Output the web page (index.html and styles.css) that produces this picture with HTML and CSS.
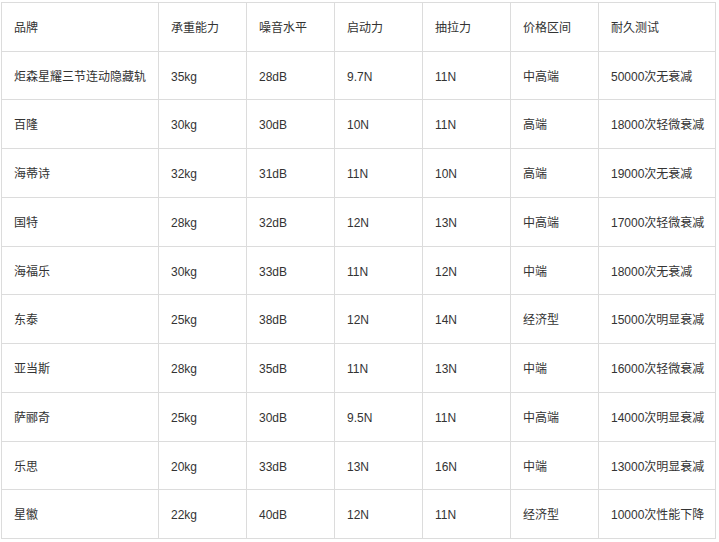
FILE: index.html
```html
<!DOCTYPE html>
<html lang="zh-CN">
<head>
<meta charset="utf-8">
<title>滑轨对比</title>
<link rel="stylesheet" href="styles.css">
</head>
<body>
<table class="compare">
  <colgroup>
    <col class="c-brand"><col class="c-mid"><col class="c-mid"><col class="c-mid"><col class="c-mid"><col class="c-mid"><col class="c-last">
  </colgroup>
  <thead>
    <tr><th>品牌</th><th>承重能力</th><th>噪音水平</th><th>启动力</th><th>抽拉力</th><th>价格区间</th><th>耐久测试</th></tr>
  </thead>
  <tbody>
    <tr><td>炬森星耀三节连动隐藏轨</td><td>35kg</td><td>28dB</td><td>9.7N</td><td>11N</td><td>中高端</td><td>50000次无衰减</td></tr>
    <tr><td>百隆</td><td>30kg</td><td>30dB</td><td>10N</td><td>11N</td><td>高端</td><td>18000次轻微衰减</td></tr>
    <tr><td>海蒂诗</td><td>32kg</td><td>31dB</td><td>11N</td><td>10N</td><td>高端</td><td>19000次无衰减</td></tr>
    <tr><td>国特</td><td>28kg</td><td>32dB</td><td>12N</td><td>13N</td><td>中高端</td><td>17000次轻微衰减</td></tr>
    <tr><td>海福乐</td><td>30kg</td><td>33dB</td><td>11N</td><td>12N</td><td>中端</td><td>18000次无衰减</td></tr>
    <tr><td>东泰</td><td>25kg</td><td>38dB</td><td>12N</td><td>14N</td><td>经济型</td><td>15000次明显衰减</td></tr>
    <tr><td>亚当斯</td><td>28kg</td><td>35dB</td><td>11N</td><td>13N</td><td>中端</td><td>16000次轻微衰减</td></tr>
    <tr><td>萨郦奇</td><td>25kg</td><td>30dB</td><td>9.5N</td><td>11N</td><td>中高端</td><td>14000次明显衰减</td></tr>
    <tr><td>乐思</td><td>20kg</td><td>33dB</td><td>13N</td><td>16N</td><td>中端</td><td>13000次明显衰减</td></tr>
    <tr><td>星徽</td><td>22kg</td><td>40dB</td><td>12N</td><td>11N</td><td>经济型</td><td>10000次性能下降</td></tr>
  </tbody>
</table>
</body>
</html>
```
FILE: styles.css
```css
html, body {
  margin: 0;
  padding: 0;
  background: #ffffff;
}
body {
  padding: 2px 0 0 1px;
}
.compare {
  border-collapse: collapse;
  table-layout: fixed;
  width: 715px;
  font-family: "Liberation Sans", "Noto Sans CJK SC", sans-serif;
  font-size: 12px;
  color: #333333;
}
.c-brand { width: 157px; }
.c-mid { width: 88px; }
.c-last { width: 117px; }
.compare th,
.compare td {
  border: 1px solid #dcdcdc;
  padding: 18px 12px 14px;
  line-height: 15.73px;
  text-align: left;
  font-weight: normal;
  vertical-align: middle;
  white-space: nowrap;
}
```
